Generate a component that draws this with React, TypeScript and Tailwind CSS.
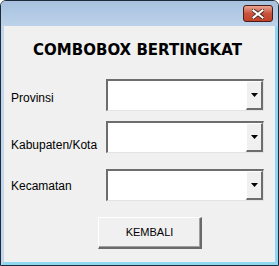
import React from "react";

function Combo() {
  return (
    <div className="w-[158px] h-[32px] flex border-t-2 border-l-2 border-t-[#6d6d6d] border-l-[#6d6d6d] border-b border-r border-b-[#e3e3e3] border-r-[#e3e3e3] bg-white">
      <div className="flex-1" />
      <div className="w-[17px] h-full flex items-center justify-center bg-[#f0f0f0] border-l border-t border-l-white border-t-white border-r-2 border-b-2 border-r-[#6d6d6d] border-b-[#6d6d6d]">
        <svg width="7" height="4" viewBox="0 0 7 4">
          <path d="M0 0h7L3.5 4z" fill="#000" />
        </svg>
      </div>
    </div>
  );
}

export default function App() {
  const rows = [
    { label: "Provinsi", mt: "mt-[13px]", pt: "pt-[5px]" },
    { label: "Kabupaten/Kota", mt: "mt-[9px]", pt: "pt-[16px]" },
    { label: "Kecamatan", mt: "mt-[15px]", pt: "pt-[2px]" },
  ];
  return (
    <div className="w-[279px] h-[266px] bg-[#f0f0f0] flex flex-col overflow-hidden border border-[#1c2a3a] rounded-t-[6px]">
      {/* title bar */}
      <div className="h-[25px] shrink-0 bg-gradient-to-b from-[#a7c1de] to-[#bcd2ea] flex justify-end items-start pr-[5px] pt-[4px]">
        <div className="w-[30px] h-[17px] rounded-[3px] border border-[#4a1a14] bg-gradient-to-b from-[#e8a593] via-[#c8523d] to-[#c2432a] flex items-center justify-center">
          <svg width="12" height="10" viewBox="0 0 12 10">
            <path d="M1.5 1.5l9 7M10.5 1.5l-9 7" stroke="#3b1a14" strokeWidth="3.6" strokeLinecap="square" />
            <path d="M1.5 1.5l9 7M10.5 1.5l-9 7" stroke="#fff" strokeWidth="2.2" strokeLinecap="square" />
          </svg>
        </div>
      </div>
      {/* client */}
      <div className="flex-1 flex border-l-[3px] border-l-[#c3d7ec] border-r-[3px] border-r-[#8fd6f0] border-b-[3px] border-b-[#8fd6f0]">
        <div className="flex-1 flex flex-col bg-[#f0f0f0]">
          <div className="h-[31px] mt-[9px] pr-[4px] flex items-center justify-center text-[15px] font-bold text-black font-['DejaVu_Sans',sans-serif]">
            COMBOBOX BERTINGKAT
          </div>
          <div className="flex flex-col">
            {rows.map((r) => (
              <div key={r.label} className={`${r.mt} flex items-center pl-[7px]`}>
                <div className={`w-[95px] ${r.pt} text-[12px] text-black font-['Liberation_Sans',sans-serif]`}>{r.label}</div>
                <Combo />
              </div>
            ))}
          </div>
          <div className="flex justify-start mt-[16px] pl-[94px]">
            <button className="w-[104px] h-[32px] bg-[#f0f0f0] text-[11px] text-black font-['Liberation_Sans',sans-serif] border-t border-l border-t-white border-l-white border-r-2 border-b-2 border-r-[#696969] border-b-[#696969] shadow-[inset_-1px_-1px_0_#a0a0a0]">
              KEMBALI
            </button>
          </div>
        </div>
      </div>
    </div>
  );
}
